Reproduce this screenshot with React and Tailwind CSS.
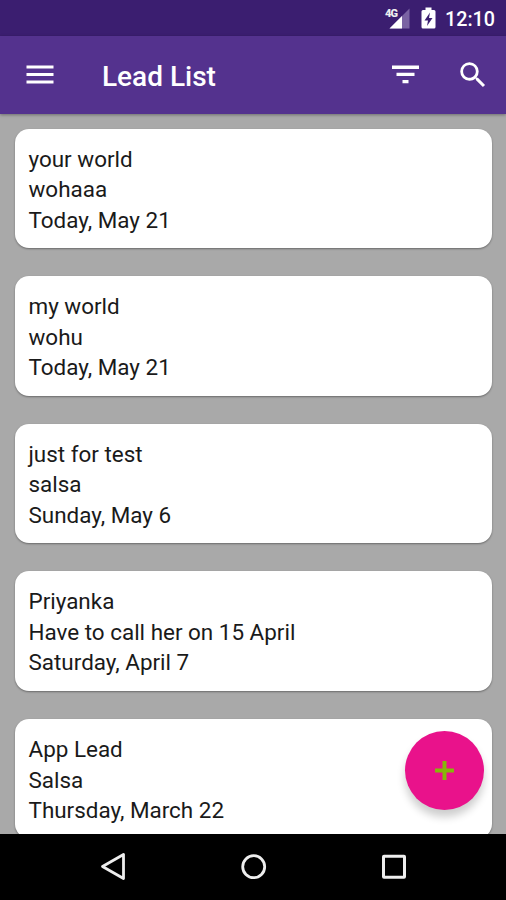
const leads = [
  ['your world', 'wohaaa', 'Today, May 21'],
  ['my world', 'wohu', 'Today, May 21'],
  ['just for test', 'salsa', 'Sunday, May 6'],
  ['Priyanka', 'Have to call her on 15 April', 'Saturday, April 7'],
  ['App Lead', 'Salsa', 'Thursday, March 22'],
];

function StatusBar() {
  return (
    <div className="flex h-[35.5px] shrink-0 items-center justify-end bg-[#3b1e70] pr-[11px] text-white">
      <div className="relative mr-[11px] h-[22px] w-[26px]">
        <svg className="h-full w-full" viewBox="0 0 26 22">
          <path d="M5.500 21.500L25.500 1.500V21.500Z" fill="#7a63a3" />
          <path d="M5.500 21.500L18 9V21.500Z" fill="#fff" />
        </svg>
        <span className="absolute left-[1px] top-[2px] bg-[#3b1e70] text-[11px] font-black leading-[9px] tracking-[-0.8px] text-[#eee]">4G</span>
      </div>
      <svg className="mr-[9px] h-[22px] w-[15px]" viewBox="0 0 15 22">
        <path d="M4.500 0.500h6V3H13q1.500 0 1.500 1.500V20q0 1.500-1.500 1.500H2Q.5 21.500 .5 20V4.500Q.5 3 2 3H4.500Z" fill="#fff" />
        <path d="M9 5.500L3.500 13.500H7L6 19L11.500 11H8Z" fill="#3b1e70" />
      </svg>
      <span className="mt-[4px] text-[19.7px] font-medium leading-6">12:10</span>
    </div>
  );
}

function AppBar() {
  return (
    <header className="z-10 flex h-[78.5px] shrink-0 items-center bg-[#54328e] pl-[26px] pr-[16px] text-white shadow-[0_1px_3px_rgba(0,0,0,0.35)]">
      <svg className="h-[20px] w-[28px]" viewBox="0 0 28 20" fill="currentColor">
        <path d="M.5 0.500h27v3H.5zM.5 8h27v3H.5zM.5 15.500h27v3H.5z" />
      </svg>
      <h1 className="ml-[48px] mt-[4px] text-[28px] font-medium leading-8">Lead List</h1>
      <svg className="ml-auto mt-px h-[20px] w-[28px]" viewBox="0 0 28 20" fill="currentColor">
        <path d="M0 .5h27v3.500H0zM4.500 7.800h18v3.200h-18zM10.500 15h6v3.200h-6z" />
      </svg>
      <svg className="ml-[36px] h-[34px] w-[34px]" viewBox="0 0 24 24" fill="currentColor">
        <path d="M15.500 14h-.790l-.280-.270A6.471 6.471 0 0 0 16 9.500 6.500 6.500 0 1 0 9.500 16c1.610 0 3.090-.590 4.230-1.570l.270.280v.790l5 4.990L20.490 19l-4.990-5zm-6 0C7.010 14 5 11.990 5 9.500S7.010 5 9.500 5 14 7.010 14 9.500 11.990 14 9.500 14z" />
      </svg>
    </header>
  );
}

function LeadCard({ lines }) {
  return (
    <article className="shrink-0 rounded-[14px] bg-white px-[14px] pb-[12.8px] pt-[15.2px] text-[22.45px] leading-[30.5px] text-[#1a1a1a] shadow-[0_1px_2px_rgba(0,0,0,0.38)]">
      {lines.map((line) => (
        <p key={line}>{line}</p>
      ))}
    </article>
  );
}

function NavBar() {
  return (
    <nav className="flex h-[66.500px] shrink-0 items-center justify-between bg-black pl-[100px] pr-[98px] text-[#eee]">
      <svg className="h-[30px] w-[28px]" viewBox="0 0 28 30" fill="none" stroke="currentColor" strokeWidth="2.800" strokeLinejoin="round">
        <path d="M23.500 2.500V26.500L2.500 14.500Z" />
      </svg>
      <svg className="h-[28px] w-[28px]" viewBox="0 0 28 28" fill="none" stroke="currentColor" strokeWidth="2.800">
        <circle cx="13.700" cy="13.700" r="11" />
      </svg>
      <svg className="h-[28px] w-[28px]" viewBox="0 0 28 28" fill="none" stroke="currentColor" strokeWidth="3" strokeLinejoin="round">
        <rect x="3.500" y="3.200" width="21" height="21" rx="0.500" />
      </svg>
    </nav>
  );
}

export default function App() {
  return (
    <div className="flex h-[900px] w-[506px] flex-col overflow-hidden bg-[#a9a9a9] font-['Roboto',sans-serif]">
      <StatusBar />
      <AppBar />
      <main className="relative min-h-0 flex-1 overflow-hidden">
        <div className="flex flex-col gap-[28.1px] pl-[14.500px] pr-[13.600px] pt-[14.500px]">
          {leads.map((lines) => (
            <LeadCard key={lines[0]} lines={lines} />
          ))}
        </div>
        <button
          aria-label="Add lead"
          className="absolute bottom-[23.500px] right-[22px] flex h-[79px] w-[79px] items-center justify-center rounded-full bg-[#e9128b] shadow-[0_7px_9px_rgba(0,0,0,0.2)]"
        >
          <svg className="h-[19px] w-[19px]" viewBox="0 0 19 19" fill="#86b80a">
            <path d="M7.500 0h4v7.500H19v4h-7.500V19h-4v-7.500H0v-4h7.500z" />
          </svg>
        </button>
      </main>
      <NavBar />
    </div>
  );
}
